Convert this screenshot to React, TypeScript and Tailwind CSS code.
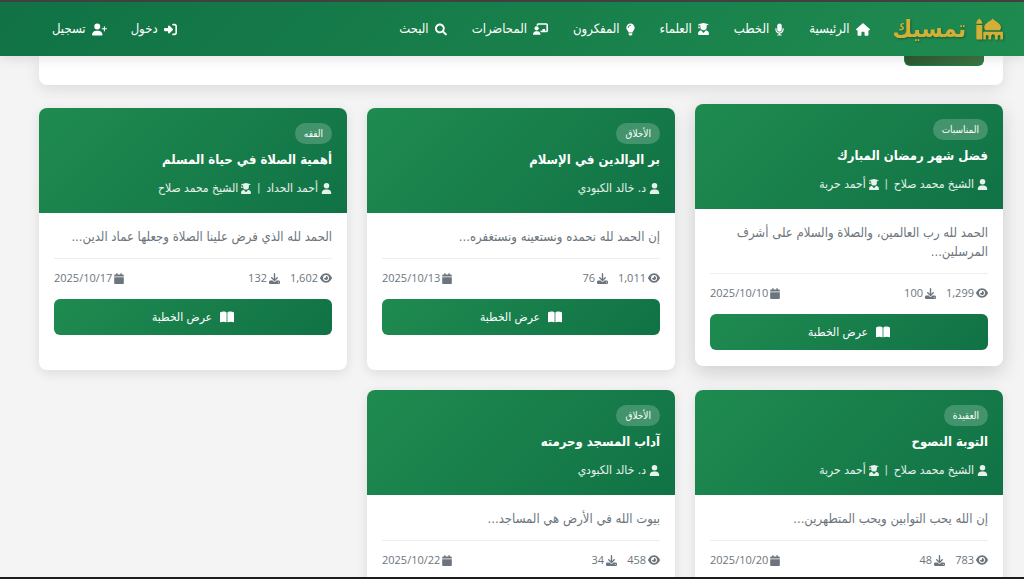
import type { ReactNode } from "react";
import type { IconType } from "react-icons";
import { FaSearch } from "react-icons/fa";
import { FaBookOpen, FaCalendar, FaDownload, FaEye, FaHouse, FaLightbulb, FaMicrophone, FaRightToBracket, FaUser, FaUserPlus } from "react-icons/fa6";

type Sermon = {
  category: string;
  title: string;
  author: string;
  scholar?: string;
  excerpt: string;
  views: string;
  downloads: string;
  date: string;
  raised?: boolean;
};

const sermons: Sermon[] = [
  { category: "المناسبات", title: "فضل شهر رمضان المبارك", author: "الشيخ محمد صلاح", scholar: "أحمد حربة", excerpt: "الحمد لله رب العالمين، والصلاة والسلام على أشرف المرسلين...", views: "1,299", downloads: "100", date: "2025/10/10", raised: true },
  { category: "الأخلاق", title: "بر الوالدين في الإسلام", author: "د. خالد الكبودي", excerpt: "إن الحمد لله نحمده ونستعينه ونستغفره...", views: "1,011", downloads: "76", date: "2025/10/13" },
  { category: "الفقه", title: "أهمية الصلاة في حياة المسلم", author: "أحمد الحداد", scholar: "الشيخ محمد صلاح", excerpt: "الحمد لله الذي فرض علينا الصلاة وجعلها عماد الدين...", views: "1,602", downloads: "132", date: "2025/10/17" },
  { category: "العقيدة", title: "التوبة النصوح", author: "الشيخ محمد صلاح", scholar: "أحمد حربة", excerpt: "إن الله يحب التوابين ويحب المتطهرين...", views: "783", downloads: "48", date: "2025/10/20" },
  { category: "الأخلاق", title: "آداب المسجد وحرمته", author: "د. خالد الكبودي", excerpt: "بيوت الله في الأرض هي المساجد...", views: "458", downloads: "34", date: "2025/10/22" },
];

function MosqueIcon({ className }: { className?: string }) {
  return (
    <svg viewBox="0 0 82 64" fill="currentColor" aria-hidden="true" className={className}>
      <path d="M10 0C6 4 1 8 1 14v2h18v-2C19 8 14 4 10 0Z" />
      <path d="M1 20h18v44H4a3 3 0 0 1-3-3Z" />
      <path d="M51 0c5 8 25 14 25 27 0 4-2 7-4 9H30c-3-2-5-5-5-9C25 14 46 8 51 0Z" />
      <path d="M25 40h53a4 4 0 0 1 4 4v17a3 3 0 0 1-3 3h-5V54a4 4 0 0 0-8 0v10h-8V55c0-4-3-6-6-8-3 2-6 4-6 8v9h-8V54a4 4 0 0 0-8 0v10h-5a3 3 0 0 1-3-3V43a3 3 0 0 1 3-3Z" />
    </svg>
  );
}

function TeacherIcon({ className }: { className?: string }) {
  return (
    <svg viewBox="0 0 46 36" fill="currentColor" aria-hidden="true" className={className}>
      <circle cx="11" cy="16" r="6.5" />
      <path d="M0 36c0-7 4-11 9-11h5c5 0 9 4 9 11Z" />
      <path d="M11 5a5 5 0 0 1 5-5h25a5 5 0 0 1 5 5v18a5 5 0 0 1-5 5H25c-1-2-3-4-4-5h8v-5h8v5h4V5H16v4c-1-1-3-2-5-2Z" />
    </svg>
  );
}

function GraduateIcon({ className }: { className?: string }) {
  return (
    <svg viewBox="0 0 33 36" fill="currentColor" aria-hidden="true" className={className}>
      <path d="M16.5 0 33 4l-7 3v5a9.5 9.5 0 0 1-19 0V7L4 6v5l2 5H0l2-5V5L0 4Z" />
      <path d="m9 22 7.5 8 7.5-8c5 1 9 5 9 11a3 3 0 0 1-3 3H3a3 3 0 0 1-3-3c0-6 4-10 9-11Z" />
    </svg>
  );
}

type IconComponent = IconType | typeof TeacherIcon;

function NavLink({ icon: Icon, iconClass, children }: { icon: IconComponent; iconClass: string; children: ReactNode }) {
  return (
    <a href="#" className="flex items-center gap-[6px] whitespace-nowrap">
      <Icon className={iconClass} />
      <span>{children}</span>
    </a>
  );
}

function SermonCard({ sermon }: { sermon: Sermon }) {
  return (
    <article
      className={
        sermon.raised
          ? "-translate-y-1 overflow-hidden rounded-lg bg-white shadow-[0_6px_20px_rgba(0,0,0,0.16)]"
          : "overflow-hidden rounded-lg bg-white shadow-[0_3px_12px_rgba(0,0,0,0.1)]"
      }
    >
      <header className="bg-linear-135 from-[#1f8b50] to-[#107245] p-[15px] text-white">
        <span className="flex h-[21px] w-fit items-center rounded-full bg-white/20 px-[9px] text-[10px] font-medium">{sermon.category}</span>
        <h2 className="mt-1 text-[13px] leading-6 font-bold whitespace-nowrap">{sermon.title}</h2>
        <p className="mt-[6px] flex items-center gap-[3px] text-[12px] leading-5 whitespace-nowrap text-white/90">
          <FaUser className="h-[11px] w-[11px]" />
          <span>{sermon.author}</span>
          {sermon.scholar && (
            <>
              <span className="px-[3px] text-[10px]">|</span>
              <GraduateIcon className="h-[11px] w-[10px]" />
              <span>{sermon.scholar}</span>
            </>
          )}
        </p>
      </header>
      <div className="px-[15px] pt-[14px] pb-4">
        <p className="text-[13px] leading-[19px] text-[#6c757d]">{sermon.excerpt}</p>
        <div className="mt-3 flex items-center justify-between border-t border-[#eeeeee] pt-[10px] font-['Open_Sans',sans-serif] text-[11px] leading-[18px] text-[#6c757d]">
          <div className="flex gap-[10px]">
            <span className="flex items-center gap-[2px]">
              <FaEye className="size-3" />
              {sermon.views}
            </span>
            <span className="flex items-center gap-[2px]">
              <FaDownload className="size-[11px]" />
              {sermon.downloads}
            </span>
          </div>
          <span className="flex items-center gap-[2px]">
            <FaCalendar className="h-[11px] w-[10px]" />
            <time dir="ltr">{sermon.date}</time>
          </span>
        </div>
        <a
          href="#"
          className="mt-3 flex h-9 items-center justify-center gap-2 rounded-md bg-linear-135 from-[#1f8b50] to-[#107245] text-[12px] font-medium text-white"
        >
          <FaBookOpen className="size-[14px]" />
          <span>عرض الخطبة</span>
        </a>
      </div>
    </article>
  );
}

export default function App() {
  return (
    <div dir="rtl" className="flex h-screen flex-col overflow-hidden border-b-2 border-[#1c1c1c] bg-[#f4f4f4] font-['DejaVu_Sans_Condensed','DejaVu_Sans',sans-serif]">
      <header className="relative z-10 flex h-14 shrink-0 items-center justify-between border-t-2 border-t-[#404040] bg-linear-135 from-[#107245] to-[#1f8b50] pr-[21px] pl-[52px] text-[13px] text-white shadow-[0_2px_12px_rgba(0,0,0,0.12)]">
        <div className="flex items-center gap-[23px]">
          <a href="#" className="flex items-center gap-[10px] text-[24px] font-bold text-[#d4af37] drop-shadow-[1px_1px_1px_rgba(0,0,0,0.3)]">
            <MosqueIcon className="h-[22px] w-[27px]" />
            <span>تمسيك</span>
          </a>
          <nav className="flex items-center gap-[25px]">
            <NavLink icon={FaHouse} iconClass="h-[13px] w-[14px]">الرئيسية</NavLink>
            <NavLink icon={FaMicrophone} iconClass="h-[13px] w-[9px]">الخطب</NavLink>
            <NavLink icon={GraduateIcon} iconClass="h-3 w-[11px]">العلماء</NavLink>
            <NavLink icon={FaLightbulb} iconClass="h-[13px] w-[9px]">المفكرون</NavLink>
            <NavLink icon={TeacherIcon} iconClass="h-3 w-[15px]">المحاضرات</NavLink>
            <NavLink icon={FaSearch} iconClass="h-[13px] w-3">البحث</NavLink>
          </nav>
        </div>
        <div className="flex items-center gap-6">
          <NavLink icon={FaRightToBracket} iconClass="h-[13px] w-[13px]">دخول</NavLink>
          <NavLink icon={FaUserPlus} iconClass="h-[13px] w-[15px]">تسجيل</NavLink>
        </div>
      </header>
      <main className="min-h-0 flex-1 overflow-hidden pr-[21px] pl-[39px]">
        <section className="rounded-b-lg bg-white px-[19px] pb-[19px] shadow-[0_4px_15px_rgba(0,0,0,0.1)]">
          <button type="button" aria-label="تصفية" className="block h-[10px] w-20 rounded-b-md border-x border-b border-[#1a8049] bg-linear-to-r from-[#2f5a33] to-[#3d7542]" />
        </section>
        <section className="mt-[23px] grid grid-cols-3 gap-5">
          {sermons.map((sermon) => (
            <SermonCard key={sermon.title} sermon={sermon} />
          ))}
        </section>
      </main>
    </div>
  );
}
